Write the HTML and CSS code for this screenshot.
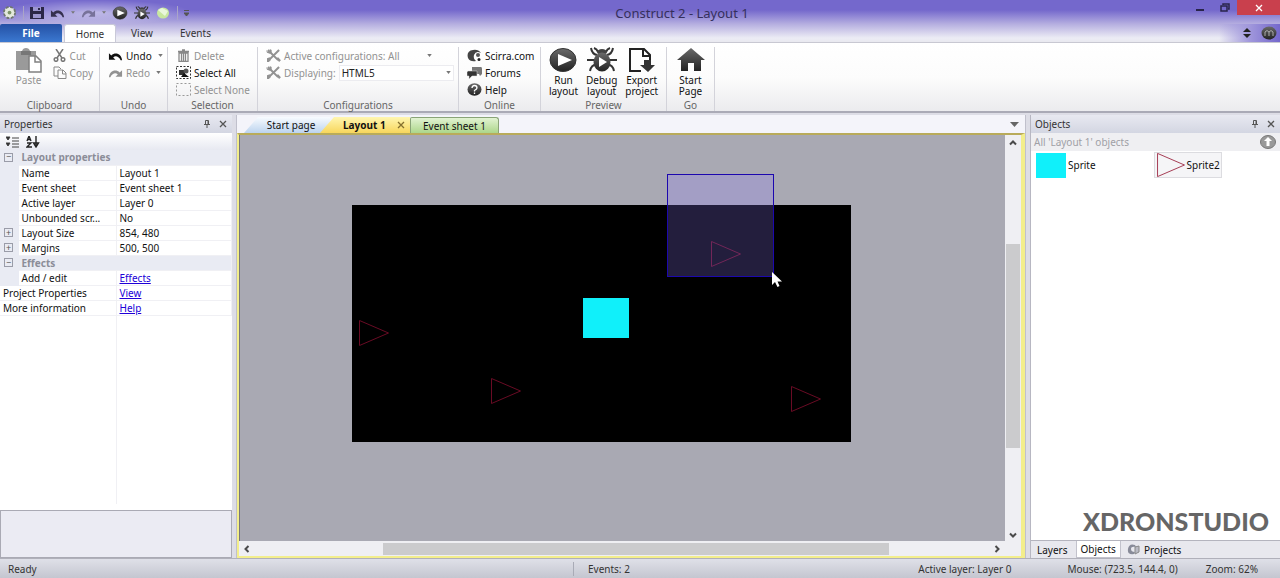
FILE: index.html
```html
<!DOCTYPE html>
<html lang="en">
<head>
  <meta charset="UTF-8" />
  <meta name="viewport" content="width=device-width, initial-scale=1.0"/>
  <title>Construct 2 - Layout 1</title>
  <link rel="stylesheet" href="styles.css">
</head>
<body>

<!-- Shared icons -->
<svg class="defs" aria-hidden="true">
  <defs>
    <linearGradient id="dark" x1="0" y1="0" x2="0" y2="1">
      <stop offset="0" stop-color="#6a6a6a"/>
      <stop offset="1" stop-color="#222"/>
    </linearGradient>
  </defs>
  <symbol id="i-undo" viewBox="0 0 16 12">
    <path d="M1 3v7h7L5.500 7.500C8 5.500 11 6 13.500 10.500H15C14.500 4 8 1 3.500 5.500z" fill="currentColor"/>
  </symbol>
  <symbol id="i-redo" viewBox="0 0 16 12">
    <path d="M15 3v7H8l2.500-2.500C8 5.500 5 6 2.500 10.500H1C1.500 4 8 1 12.500 5.500z" fill="currentColor"/>
  </symbol>
  <symbol id="i-arrow" viewBox="0 0 6 4"><path d="M0 0h6L3 4z" fill="currentColor"/></symbol>
  <symbol id="i-play" viewBox="0 0 28 26">
    <ellipse cx="14" cy="13" rx="13" ry="11.500" fill="url(#dark)" stroke="#333"/>
    <path d="M9 7v12l14-6z" fill="#fff"/>
  </symbol>
  <symbol id="i-bug" viewBox="0 0 30 26">
    <g fill="none" stroke="#333" stroke-width="2">
      <path d="M10 8Q5 7 4 1M20 8Q25 7 26 1M9 13H0M21 13h9M10 17Q4 18 3 24M20 17q6 1 7 7M11 5Q10 2 7 1M19 5q1-3 4-4"/>
    </g>
    <ellipse cx="15" cy="5" rx="5" ry="3" fill="#444"/>
    <ellipse cx="15" cy="15" rx="8.500" ry="9.500" fill="url(#dark)"/>
    <path d="M12 10v10l8-5z" fill="#fff"/>
  </symbol>
  <symbol id="i-pin" viewBox="0 0 8 8">
    <path d="M2.500.5h3v4h-3zM1 4.500h6M4 5v3M5 1v3" fill="none" stroke="currentColor"/>
  </symbol>
  <symbol id="i-close" viewBox="0 0 8 8"><path d="M1 1l6 6M7 1L1 7" fill="none" stroke="currentColor" stroke-width="1.300"/></symbol>
  <symbol id="i-chevron" viewBox="0 0 8 8"><path d="M1 5.500l3-3 3 3" fill="none" stroke="currentColor" stroke-width="2"/></symbol>
  <symbol id="i-tools" viewBox="0 0 16 14">
    <path d="M2 1l11 11M14 1L3 12" stroke="currentColor" stroke-width="2.200" fill="none"/>
    <path d="M0 1l2 2 2-1 0-2 2 1v3L4 5 1 4zM11 10l2-1 3 3-2 2zM1 10l3-1 1 3-2 2H1z" fill="currentColor"/>
  </symbol>
  <symbol id="i-sprite" viewBox="0 0 32 28"><path d="M1.500 1.500v25l29-12.500z" fill="none" stroke="currentColor"/></symbol>
</svg>

<div class="app">
  <header class="titlebar">
    <div class="quick">
      <svg class="gear" viewBox="0 0 16 16"><circle cx="8" cy="8" r="6" fill="#e6eadf" stroke="#6f7770" stroke-width="2" stroke-dasharray="3 1.700"/><circle cx="8" cy="8" r="4.500" fill="#e3e9dc"/><circle cx="8" cy="8" r="2" fill="#7d9468"/></svg>
      <span class="bar"></span>
      <button aria-label="Save"><svg width="14" height="12" viewBox="0 0 14 12"><path d="M0 0h14v12H0z" fill="#2b2747"/><path d="M3 0h8v4H3zM3 7h8v4H3z" fill="#9c96cf"/><path d="M8 1h2v2H8z" fill="#2b2747"/></svg></button>
      <button aria-label="Undo"><svg width="15" height="12"><use href="#i-undo"/></svg><svg class="caret" width="4" height="3"><use href="#i-arrow"/></svg></button>
      <button class="faded" aria-label="Redo"><svg width="15" height="12"><use href="#i-redo"/></svg><svg class="caret" width="4" height="3"><use href="#i-arrow"/></svg></button>
      <button aria-label="Run"><svg width="16" height="14"><use href="#i-play"/></svg></button>
      <button aria-label="Debug"><svg width="16" height="14"><use href="#i-bug"/></svg></button>
      <button aria-label="Status"><svg width="15" height="14" viewBox="0 0 15 14"><ellipse cx="7" cy="7" rx="6" ry="5.500" fill="#c8e8a0"/><path d="M2 4l4-2 6 3-3 5z" fill="#e9f7dc"/></svg></button>
      <span class="bar"></span>
      <button aria-label="Customize"><svg width="5" height="6" viewBox="0 0 5 6"><path d="M0 .5h5M0 3h5L2.500 6z" fill="#555" stroke="#555"/></svg></button>
    </div>
    <h1>Construct 2 - Layout 1</h1>
    <div class="window-buttons">
      <button aria-label="Minimize"><svg width="8" height="8" viewBox="0 0 8 8"><path d="M0 6h8" stroke="#29244b" stroke-width="2"/></svg></button>
      <button aria-label="Restore"><svg width="10" height="9" viewBox="0 0 10 9"><path d="M1 3h6v5H1zM3 2V1h6v5H8" fill="none" stroke="#29244b" stroke-width="1.500"/></svg></button>
      <button class="win-close" aria-label="Close"><svg width="8" height="8"><use href="#i-close"/></svg></button>
    </div>
  </header>

  <nav class="menu">
    <button class="menu-file">File</button>
    <button class="menu-tab active">Home</button>
    <button class="menu-tab">View</button>
    <button class="menu-tab events">Events</button>
    <div class="menu-right">
      <button aria-label="Toggle ribbon"><svg width="8" height="10" viewBox="0 0 8 10"><path d="M0 4l4-4 4 4zM0 6h8l-4 4z" fill="#222"/></svg></button>
      <button aria-label="About"><svg width="16" height="14" viewBox="0 0 16 14"><ellipse cx="8" cy="7" rx="7.500" ry="6.500" fill="url(#dark)"/><path d="M4 10V6q2-3 4 0v4M8 6q2-3 4 0v4" fill="none" stroke="#aaa"/></svg></button>
    </div>
  </nav>

  <section class="ribbon">
    <div class="group clipboard">
      <div class="tools">
        <button class="big off">
          <svg width="28" height="26" viewBox="0 0 28 26"><path d="M1 4h6q1-3 4-3t4 3h6v8h-7v11H1z" fill="#9a9a9a"/><path d="M6 4h10v4H6z" fill="#777"/><path d="M14 9h7l5 5v11H14z" fill="#fff" stroke="#808080" stroke-width="1.500"/><path d="M20 9v6h6" fill="none" stroke="#808080" stroke-width="1.500"/></svg>
          Paste
        </button>
        <div class="stack">
          <button class="row off"><svg width="14" height="13" viewBox="0 0 14 13"><path d="M3 0l6 9M10 0L4 9" stroke="#777" stroke-width="1.500"/><g fill="none" stroke="#777" stroke-width="1.500"><circle cx="3" cy="10.500" r="1.800"/><circle cx="10" cy="10.500" r="1.800"/></g></svg>Cut</button>
          <button class="row off"><svg width="14" height="13" viewBox="0 0 14 13"><path d="M5 10H1V1h5l2 2M5 4h5l3 3v5.500H5zM9.500 4v4H13" fill="none" stroke="#888"/></svg>Copy</button>
        </div>
      </div>
      <div class="group-label">Clipboard</div>
    </div>
    <div class="group undo">
      <div class="stack">
        <button class="row"><svg width="15" height="12"><use href="#i-undo"/></svg>Undo<svg class="caret" width="5" height="3"><use href="#i-arrow"/></svg></button>
        <button class="row off"><svg width="15" height="12"><use href="#i-redo"/></svg>Redo<svg class="caret" width="5" height="3"><use href="#i-arrow"/></svg></button>
      </div>
      <div class="group-label">Undo</div>
    </div>
    <div class="group selection">
      <div class="stack">
        <button class="row off"><svg width="15" height="13" viewBox="0 0 15 13"><path d="M3 4h9v8.500H3zM5.500 4v8M7.500 4v8M9.500 4v8M2 2.500h11M6 1h3" fill="none" stroke="#888" stroke-width="1.300"/></svg>Delete</button>
        <button class="row"><svg width="15" height="13" viewBox="0 0 15 13"><path d="M.5.500h14v12H.5z" fill="none" stroke="#333" stroke-dasharray="2 1.500"/><path d="M3 4h6v5H3z" fill="#333"/><circle cx="10" cy="5" r="2.500" fill="#555"/><path d="M5 11l3-4 5 4z" fill="#111"/></svg>Select All</button>
        <button class="row off"><svg width="15" height="13" viewBox="0 0 15 13"><path d="M.5.500h14v12H.5z" fill="none" stroke="#999" stroke-dasharray="2 2"/></svg>Select None</button>
      </div>
      <div class="group-label">Selection</div>
    </div>
    <div class="group configurations">
      <div class="stack">
        <button class="row off"><svg width="15" height="13"><use href="#i-tools"/></svg>Active configurations: All<svg class="caret end" width="5" height="3"><use href="#i-arrow"/></svg></button>
        <div class="row display">
          <svg width="15" height="13"><use href="#i-tools"/></svg>
          <label for="displaying">Displaying:</label>
          <span class="picker">
            <select id="displaying"><option>HTML5</option></select>
            <svg class="caret" width="5" height="3"><use href="#i-arrow"/></svg>
          </span>
        </div>
      </div>
      <div class="group-label">Configurations</div>
    </div>
    <div class="group online">
      <div class="stack">
        <button class="row"><svg width="15" height="13" viewBox="0 0 15 13"><path d="M14 4Q9 1 7 6q-1 4 2 6Q3 13 1 9-1 2 6 1q5-1 8 3z" fill="#444"/><circle cx="11" cy="6" r="2" fill="#555"/><circle cx="12" cy="10.500" r="1.500" fill="#222"/></svg>Scirra.com</button>
        <button class="row"><svg width="15" height="13" viewBox="0 0 15 13"><path d="M5 1h9q1 0 1 2v5l-2 2-1-2H5z" fill="#777"/><path d="M1 5h9v5H5l-3 3v-3H0V6z" fill="#333" stroke="#ddd" stroke-width=".5"/></svg>Forums</button>
        <button class="row"><svg width="15" height="13" viewBox="0 0 15 13"><ellipse cx="7.500" cy="6.500" rx="7" ry="6.200" fill="url(#dark)"/><path d="M5 5q0-2.500 2.500-2.500T10 5q0 1-2.500 2.500V8.500M7.500 9.500v1.500" fill="none" stroke="#fff" stroke-width="1.300"/></svg>Help</button>
      </div>
      <div class="group-label">Online</div>
    </div>
    <div class="group preview">
      <div class="tools">
        <button class="big"><svg width="28" height="26"><use href="#i-play"/></svg>Run<br>layout</button>
        <button class="big"><svg width="30" height="26"><use href="#i-bug"/></svg>Debug<br>layout</button>
        <button class="big"><svg width="28" height="26" viewBox="0 0 28 26"><path d="M13 24H2V2h14l6 6v5M15 2v7h7" fill="none" stroke="#222" stroke-width="2"/><path d="M16 13h7v5h4l-7 7-8-7h4z" fill="#333"/></svg>Export<br>project</button>
      </div>
      <div class="group-label">Preview</div>
    </div>
    <div class="group go">
      <div class="tools">
        <button class="big"><svg width="28" height="26" viewBox="0 0 28 26"><path d="M14 1l14 12h-4v11h-7v-8h-6v8H4V13H0z" fill="url(#dark)"/></svg>Start<br>Page</button>
      </div>
      <div class="group-label">Go</div>
    </div>
  </section>

  <main class="workspace">
    <aside class="panel properties">
      <div class="panel-head">
        <h2>Properties</h2>
        <button aria-label="Pin"><svg width="8" height="8"><use href="#i-pin"/></svg></button>
        <button aria-label="Close"><svg width="8" height="8"><use href="#i-close"/></svg></button>
      </div>
      <div class="prop-tools">
        <button aria-label="Categorized"><svg width="13" height="12" viewBox="0 0 13 12"><path d="M0 1h4L2 4zM0 7h4L2 10zM6 2h7M6 5h7M6 8h7M6 11h7" fill="#222" stroke="#444"/></svg></button>
        <button aria-label="Sort alphabetically"><svg width="14" height="12" viewBox="0 0 14 12"><path d="M1 5l2-5 2 5M2 3.500h2M1 7h4L1 11h5M10 0v10M7.500 7l2.500 4 2.500-4z" fill="none" stroke="#222" stroke-width="1.400"/></svg></button>
      </div>
      <div class="prop-grid">
        <table>
          <colgroup><col class="c-gutter"><col class="c-name"><col></colgroup>
          <tr class="category"><td><button class="toggle" aria-label="Collapse">−</button></td><th colspan="2">Layout properties</th></tr>
          <tr><td></td><th>Name</th><td>Layout 1</td></tr>
          <tr><td></td><th>Event sheet</th><td>Event sheet 1</td></tr>
          <tr><td></td><th>Active layer</th><td>Layer 0</td></tr>
          <tr><td></td><th>Unbounded scr...</th><td>No</td></tr>
          <tr><td><button class="toggle" aria-label="Expand">+</button></td><th>Layout Size</th><td>854, 480</td></tr>
          <tr><td><button class="toggle" aria-label="Expand">+</button></td><th>Margins</th><td>500, 500</td></tr>
          <tr class="category"><td><button class="toggle" aria-label="Collapse">−</button></td><th colspan="2">Effects</th></tr>
          <tr><td></td><th>Add / edit</th><td><a href="#">Effects</a></td></tr>
          <tr><th colspan="2">Project Properties</th><td><a href="#">View</a></td></tr>
          <tr><th colspan="2">More information</th><td><a href="#">Help</a></td></tr>
        </table>
        <div class="grid-rest"></div>
      </div>
      <div class="description"></div>
    </aside>

    <section class="editor">
      <div class="doc-tabs">
        <button class="doc-tab start">Start page</button>
        <button class="doc-tab current">Layout 1<svg width="8" height="8"><use href="#i-close"/></svg></button>
        <button class="doc-tab sheet">Event sheet 1</button>
        <button class="tab-list" aria-label="Tab list"><svg width="9" height="5" viewBox="0 0 9 5"><path d="M0 0h9L4.500 5z" fill="#666"/></svg></button>
      </div>
      <div class="view">
        <div class="canvas">
          <div class="stage"></div>
          <svg class="sprite s1"><use href="#i-sprite"/></svg>
          <svg class="sprite s2"><use href="#i-sprite"/></svg>
          <svg class="sprite s3"><use href="#i-sprite"/></svg>
          <svg class="sprite s4"><use href="#i-sprite"/></svg>
          <div class="player"></div>
          <div class="marquee"></div>
          <svg class="cursor" viewBox="0 0 10 15"><path d="M0 0v13l3-3 2.500 5 2-1-2-4.500H10z" fill="#fff"/></svg>
        </div>
        <div class="scroll-v">
          <svg width="8" height="8"><use href="#i-chevron"/></svg>
          <div class="track"><div class="thumb"></div></div>
          <svg class="down" width="8" height="8"><use href="#i-chevron"/></svg>
        </div>
        <div class="scroll-h">
          <svg class="left" width="8" height="8"><use href="#i-chevron"/></svg>
          <div class="track"><div class="thumb"></div></div>
          <svg class="right" width="8" height="8"><use href="#i-chevron"/></svg>
        </div>
      </div>
    </section>

    <aside class="panel objects">
      <div class="panel-head">
        <h2>Objects</h2>
        <button aria-label="Pin"><svg width="8" height="8"><use href="#i-pin"/></svg></button>
        <button aria-label="Close"><svg width="8" height="8"><use href="#i-close"/></svg></button>
      </div>
      <div class="filter">
        <span>All 'Layout 1' objects</span>
        <button aria-label="Up"><svg width="16" height="14" viewBox="0 0 16 14"><ellipse cx="8" cy="7" rx="7.500" ry="6.500" fill="#999" stroke="#777"/><path d="M8 2l4 4H9.500v5h-3V6H4z" fill="#fff"/></svg></button>
      </div>
      <div class="object-list">
        <button class="object"><span class="swatch"></span>Sprite</button>
        <button class="object selected"><svg width="32" height="26" viewBox="0 0 32 28"><use href="#i-sprite"/></svg>Sprite2</button>
        <div class="watermark">XDRONSTUDIO</div>
      </div>
      <div class="panel-tabs">
        <button>Layers</button>
        <button class="active">Objects</button>
        <button><svg width="13" height="11" viewBox="0 0 13 11"><path d="M8 1Q2-1 1 5t6 5l1-2Q4 8 4 5t5-2z" fill="#888b99"/><path d="M8 3l4-1v6l-4 2z" fill="#b9bac4" stroke="#888"/></svg>Projects</button>
      </div>
    </aside>
  </main>

  <footer class="status">
    <span class="ready">Ready</span>
    <span class="events-count">Events: 2</span>
    <span class="layer">Active layer: Layer 0</span>
    <span class="mouse">Mouse: (723.5, 144.4, 0)</span>
    <span class="zoom">Zoom: 62%</span>
  </footer>
</div>

</body>
</html>
```
FILE: styles.css
```css
* {
  box-sizing: border-box;
}

body {
  margin: 0;
  font-family: "Noto Sans", "Open Sans", sans-serif;
  font-size: 10px;
  line-height: 14px;
  color: #111;
}

button, select {
  font: inherit;
  color: inherit;
  background: none;
  border: 0;
  padding: 0;
  margin: 0;
  white-space: nowrap;
}

svg {
  flex: none;
}

h1, h2 {
  margin: 0;
  font-weight: 400;
}

.defs {
  position: absolute;
  width: 0;
  height: 0;
}

.app {
  display: flex;
  flex-direction: column;
  height: 100vh;
  overflow: hidden;
  background: linear-gradient(#7468cc, #7468cc 10px, #b5aee0 24px, #ececf5 38px, #e8e8ee 43px);
}

/* Title bar */
.titlebar {
  display: grid;
  grid-template-columns: 1fr auto 1fr;
  height: 24px;
  flex: none;
}

.titlebar h1 {
  font-size: 13px;
  line-height: 26px;
  color: #352f5c;
  padding-left: 84px;
}

.quick {
  display: flex;
  align-items: center;
  align-self: start;
  justify-self: start;
  gap: 6px;
  width: 190px;
  height: 25px;
  padding-left: 2px;
  color: #35304f;
  background: radial-gradient(ellipse, rgba(255, 255, 255, 0.5), rgba(255, 255, 255, 0) 72%);
}

.quick button {
  display: flex;
  align-items: center;
  gap: 6px;
}

.quick .faded {
  color: #77729a;
}

.gear {
  width: 15px;
  height: 15px;
}

.bar {
  width: 1px;
  height: 14px;
  background: #aaa5c8;
}

.window-buttons {
  display: flex;
  justify-content: flex-end;
  height: 15px;
}

.window-buttons button {
  width: 25px;
}

.window-buttons .win-close {
  width: 43px;
  color: #fff;
  background: #c9404d;
}

/* Menu tabs */
.menu {
  display: flex;
  height: 18px;
  flex: none;
  color: #333;
}

.menu-file {
  width: 62px;
  color: #fff;
  font-weight: 700;
  background: linear-gradient(#2450a4, #3b78d0);
  border-radius: 2px 2px 0 0;
}

.menu-tab {
  width: 52px;
}

.menu-tab.events {
  width: 55px;
}

.menu-tab.active {
  margin-left: 2px;
  background: #fff;
  border: 1px solid #c9c9d8;
  border-bottom: 0;
  border-radius: 3px 3px 0 0;
}

.menu-right {
  display: flex;
  align-items: center;
  gap: 10px;
  margin-left: auto;
  padding: 0 3px 0 24px;
  background: linear-gradient(90deg, rgba(116, 104, 204, 0), #a198dc 50%, #7468cc);
}

.menu-right button {
  display: flex;
}

/* Ribbon */
.ribbon {
  display: flex;
  flex: none;
  height: 71px;
  padding-top: 4px;
  background: linear-gradient(#fff, #fcfcfc 50%, #ebebee);
  border-top: 1px solid #c8c8d2;
  border-bottom: 2px solid #aaaab6;
}

.group {
  display: flex;
  flex-direction: column;
  justify-content: space-between;
  flex: none;
  border-right: 1px solid #d3d3da;
}

.clipboard { width: 100px; }
.undo { width: 68px; }
.selection { width: 90px; }
.configurations { width: 201px; }
.online { width: 82px; }
.preview { width: 126px; }
.go { width: 48px; }

.group-label {
  text-align: center;
  line-height: 12px;
  color: #666;
}

.tools {
  display: flex;
  justify-content: space-evenly;
}

.clipboard .tools {
  justify-content: flex-end;
  gap: 10px;
  padding-right: 6px;
}

.stack {
  display: flex;
  flex-direction: column;
  padding-left: 8px;
}

.clipboard .stack {
  padding-left: 0;
}

.row {
  display: flex;
  align-items: center;
  gap: 3px;
  height: 17px;
}

.off, .display {
  color: #929292;
}

.caret {
  margin-left: 3px;
  color: #777;
}

.quick .caret {
  margin-left: 0;
}

.big {
  display: block;
  line-height: 11px;
  text-align: center;
}

.big svg {
  display: block;
  margin: 0 auto 2px;
}

.caret.end {
  margin-left: auto;
  margin-right: 26px;
}

.picker {
  display: flex;
  align-items: center;
  flex: 1;
  margin-right: 4px;
  padding-right: 2px;
  border: 1px solid #ececf0;
  background: #fff;
}

.picker select {
  appearance: none;
  flex: 1;
  color: #222;
  padding-left: 2px;
}

/* Workspace */
.workspace {
  display: flex;
  gap: 4px;
  flex: 1;
  min-height: 0;
  padding-top: 2px;
  background: #dddde6;
}

.panel {
  display: flex;
  flex-direction: column;
  flex: none;
  background: #fff;
}

.properties {
  width: 232px;
}

.objects {
  width: 250px;
  border-left: 1px solid #b7b7c2;
}

.panel-head {
  display: flex;
  align-items: center;
  gap: 8px;
  height: 18px;
  padding: 0 5px 0 4px;
  background: linear-gradient(#e8e9f1, #d3d6e2);
  color: #555;
}

.panel-head h2 {
  flex: 1;
  font-size: 10px;
  color: #333;
}

.panel-head button {
  display: flex;
}

.prop-tools {
  display: flex;
  align-items: center;
  gap: 7px;
  height: 17px;
  padding-left: 6px;
  background: linear-gradient(#fff, #e7e9f1);
}

.prop-tools button {
  display: flex;
}

.prop-grid {
  display: flex;
  flex-direction: column;
  flex: 1;
  min-height: 0;
}

.prop-grid table {
  width: 100%;
  table-layout: fixed;
  border-collapse: collapse;
}

.c-gutter { width: 18px; }
.c-name { width: 98px; }

.prop-grid tr {
  height: 15px;
}

.prop-grid th, .prop-grid td {
  padding: 0 3px;
  line-height: 14px;
  text-align: left;
  font-weight: 400;
  color: #111;
  white-space: nowrap;
  border-bottom: 1px solid #f0f0f4;
  border-right: 1px solid #f0f0f4;
}

.prop-grid td:first-child {
  padding-left: 4px;
  background: #e9ebf3;
  border-color: #e9ebf3;
}

.prop-grid .category th {
  font-weight: 700;
  color: #8b8d98;
  background: #e9ebf3;
}

.prop-grid a {
  color: #2000d8;
}

.toggle {
  display: block;
  width: 9px;
  height: 9px;
  border: 1px solid #9a9ca8;
  font-size: 9px;
  line-height: 6px;
  color: #555;
}

.grid-rest {
  flex: 1;
  width: 117px;
  border-right: 1px solid #f0f0f4;
}

.description {
  height: 48px;
  margin-top: 6px;
  background: #ebebf3;
  border: 1px solid #aaaab4;
}

/* Editor */
.editor {
  display: flex;
  flex-direction: column;
  flex: 1;
  min-width: 0;
  border-left: 1px solid #c0c0cc;
  border-right: 1px solid #c0c0cc;
}

.doc-tabs {
  display: flex;
  align-items: flex-end;
  height: 18px;
  padding-left: 7px;
  background: #f4f4fa;
}

.doc-tab {
  height: 16px;
  color: #111;
}

.doc-tab.start {
  width: 86px;
  padding-left: 8px;
  background: linear-gradient(#f8fbff, #bcd3ee);
  clip-path: polygon(14px 0, 100% 0, 100% 100%, 0 100%);
}

.doc-tab.current {
  display: flex;
  align-items: center;
  justify-content: space-between;
  width: 90px;
  margin-left: -10px;
  padding: 0 5px 0 23px;
  font-weight: 700;
  background: linear-gradient(#fff6b0, #f7d65c);
  clip-path: polygon(14px 0, 100% 0, 100% 100%, 0 100%);
}

.doc-tab.current svg {
  color: #85702e;
}

.doc-tab.sheet {
  width: 89px;
  background: linear-gradient(#e2f3d2, #acd68a);
  border: 1px solid #8aa477;
  border-bottom: 0;
  border-radius: 2px 3px 0 0;
}

.tab-list {
  display: flex;
  align-self: center;
  margin-left: auto;
  padding-right: 6px;
}

.view {
  display: grid;
  grid-template: 1fr 15px / 1fr 16px;
  flex: 1;
  min-height: 0;
  border: 2px solid #f3ee8c;
  border-right-width: 4px;
  border-top-color: #b9ab5a;
}

.canvas {
  position: relative;
  overflow: hidden;
  background: #a9a9b3;
  border-left: 1px solid #77757c;
}

.stage, .player, .marquee, .sprite, .cursor {
  position: absolute;
}

.stage {
  left: 112px;
  top: 70px;
  width: 499px;
  height: 237px;
  background: #000;
}

.player {
  left: 343px;
  top: 163px;
  width: 46px;
  height: 40px;
  background: #10f0fa;
}

.marquee {
  left: 427px;
  top: 39px;
  width: 107px;
  height: 103px;
  background: rgba(147, 124, 255, 0.24);
  border: 1px solid #1c08ae;
}

.sprite {
  width: 32px;
  height: 28px;
  color: #690b24;
}

.s1 { left: 118px; top: 184px; }
.s2 { left: 250px; top: 242px; }
.s3 { left: 550px; top: 250px; }
.s4 { left: 470px; top: 105px; }

.cursor {
  left: 532px;
  top: 137px;
  width: 10px;
  height: 15px;
}

.scroll-v, .scroll-h {
  display: flex;
  align-items: center;
  background: #efeff3;
  color: #4b4b4b;
}

.scroll-v {
  flex-direction: column;
  padding: 4px 0 2px;
}

.scroll-h {
  grid-column: 1 / 3;
  padding: 0 20px 0 4px;
}

.track {
  display: flex;
  flex: 1;
}

.scroll-v .track {
  flex-direction: column;
  justify-content: center;
  width: 14px;
  padding-top: 14px;
}

.scroll-v .thumb {
  height: 55%;
  background: #cbcbcd;
}

.scroll-h .track {
  justify-content: center;
  padding-left: 28px;
}

.scroll-h .thumb {
  width: 71%;
  height: 12px;
  background: #cbcbcd;
}

.down { rotate: 180deg; }
.left { rotate: -90deg; }
.right { rotate: 90deg; }

/* Objects */
.filter {
  display: flex;
  align-items: center;
  justify-content: space-between;
  height: 18px;
  padding: 0 4px 0 3px;
  color: #a0a0a6;
  background: #efeff2;
}

.filter button {
  display: flex;
}

.object-list {
  display: grid;
  grid-template-columns: 1fr 1fr;
  align-content: space-between;
  flex: 1;
  padding: 1px 9px 5px 5px;
}

.object {
  display: flex;
  align-items: center;
  justify-self: start;
  gap: 2px;
  height: 26px;
  color: #111;
}

.object.selected {
  gap: 0;
  padding-right: 1px;
  background: #f5f5f7;
  border: 1px solid #dcdce0;
}

.object.selected svg {
  color: #a03048;
}

.swatch {
  width: 30px;
  height: 25px;
  background: #10f0fa;
}

.watermark {
  grid-column: 1 / 3;
  justify-self: end;
  padding-right: 2px;
  font-family: Lato, sans-serif;
  font-size: 25px;
  font-weight: 900;
  line-height: 28px;
  color: #666;
}

.panel-tabs {
  display: flex;
  height: 18px;
  background: #e8e8ee;
  border-top: 1px solid #b4b4be;
}

.panel-tabs button {
  display: flex;
  align-items: center;
  gap: 4px;
  padding: 0 8px 0 6px;
}

.panel-tabs .active {
  background: #fff;
  border: 1px solid #c2c2cc;
  border-top: 0;
  padding: 0 4px;
}

/* Status bar */
.status {
  display: grid;
  grid-template-columns: 574px 1fr auto auto auto;
  align-items: center;
  height: 20px;
  flex: none;
  padding: 0 22px 0 8px;
  color: #333;
  background: linear-gradient(#dfe0e8, #c4c6d0);
  border-top: 1px solid #b0b0ba;
}

.ready {
  margin-right: 8px;
  border-right: 1px solid #a9abb6;
}

.events-count {
  padding-left: 6px;
}

.layer {
  padding-right: 56px;
}

.mouse {
  padding-right: 28px;
}
```
